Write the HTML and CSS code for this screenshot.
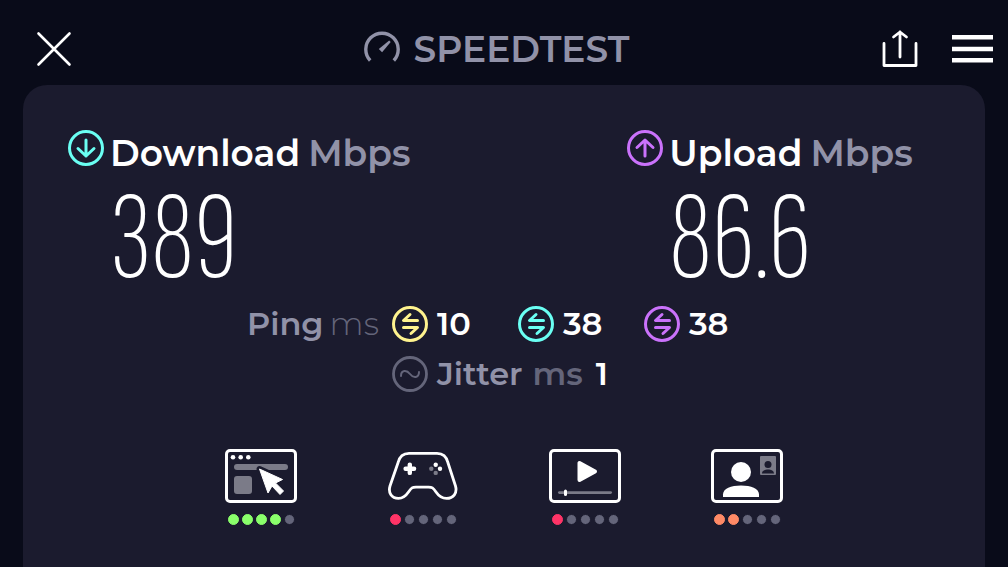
FILE: index.html
```html
<!DOCTYPE html>
<html lang="en">
<head>
    <meta charset="UTF-8">
    <meta name="viewport" content="width=device-width, initial-scale=1.0">
    <title>Speedtest</title>
    <link rel="stylesheet" href="styles.css">
</head>
<body>

<header class="topbar">
    <button type="button" class="icon-button close" aria-label="Close">
        <svg width="36" height="36" viewBox="0 0 36 36" fill="none" stroke="#fff" stroke-width="2.6" stroke-linecap="round"><path d="M2.5 2.5l31 31M33.5 2.5l-31 31"/></svg>
    </button>

    <h1 class="logo">
        <svg width="36" height="36" viewBox="0 0 36 36" fill="none" stroke="#9192a8" stroke-width="3.4"><path d="M6.2 29.500A16.2 16.2 0 1 1 29.8 29.500"/><path fill="#9192a8" stroke="none" d="M25.2 9.500l1.500 1.500-8.600 10.300-3.300-3.300z"/></svg>
        <span>SPEEDTEST</span>
    </h1>

    <div class="actions">
        <button type="button" class="icon-button" aria-label="Share">
            <svg width="36" height="38" viewBox="0 0 36 38" fill="none" stroke="#fff" stroke-width="2.8" stroke-linecap="round" stroke-linejoin="round"><path d="M2 13.500v22h32v-22M18 27V2M11.500 7L18 2l6.500 5"/></svg>
        </button>
        <button type="button" class="icon-button" aria-label="Menu">
            <svg width="41" height="28" viewBox="0 0 41 28" fill="#fff"><path d="M0 0h41v4.600H0zM0 11.700h41v4.600H0zM0 23h41v4.600H0z"/></svg>
        </button>
    </div>
</header>

<main class="card">
    <!-- Download and upload -->
    <section class="results">
        <div class="result">
            <svg width="36" height="36" viewBox="0 0 36 36" fill="none" stroke="#6afff3" stroke-width="3" stroke-linecap="round" stroke-linejoin="round"><circle cx="18" cy="18" r="16.500"/><path d="M18 10v16M10 18.500l8 7.500 8-7.500"/></svg>
            <h2>Download <span>Mbps</span></h2>
            <p>389</p>
        </div>
        <div class="result">
            <svg width="36" height="36" viewBox="0 0 36 36" fill="none" stroke="#ca72fb" stroke-width="3" stroke-linecap="round" stroke-linejoin="round"><circle cx="18" cy="18" r="16.500"/><path d="M18 26V10M10 17.500l8-7.500 8 7.500"/></svg>
            <h2>Upload <span>Mbps</span></h2>
            <p>86.6</p>
        </div>
    </section>

    <!-- Ping and jitter -->
    <section class="latency">
        <div class="label">Ping <span class="unit">ms</span></div>
        <div class="value yellow">
            <svg width="36" height="36" viewBox="0 0 36 36" fill="none" stroke="currentColor" stroke-width="3" stroke-linecap="round" stroke-linejoin="round"><circle cx="18" cy="18" r="16.500"/><path d="M18 8.500L11.500 14.500H25.500M11.500 21.500H25.500L19 27.500"/></svg>
            <span>10</span>
        </div>
        <div class="value cyan">
            <svg width="36" height="36" viewBox="0 0 36 36" fill="none" stroke="currentColor" stroke-width="3" stroke-linecap="round" stroke-linejoin="round"><circle cx="18" cy="18" r="16.500"/><path d="M18 8.500L11.500 14.500H25.500M11.500 21.500H25.500L19 27.500"/></svg>
            <span>38</span>
        </div>
        <div class="value purple">
            <svg width="36" height="36" viewBox="0 0 36 36" fill="none" stroke="currentColor" stroke-width="3" stroke-linecap="round" stroke-linejoin="round"><circle cx="18" cy="18" r="16.500"/><path d="M18 8.500L11.500 14.500H25.500M11.500 21.500H25.500L19 27.500"/></svg>
            <span>38</span>
        </div>
        <div class="jitter">
            <svg width="36" height="36" viewBox="0 0 36 36" fill="none" stroke="#64657a" stroke-width="2.800" stroke-linecap="round"><circle cx="18" cy="18" r="16.500"/><path stroke-width="2" d="M9 20c0-6 5.500-6.500 9-2s9 4 9-2"/></svg>
            <div class="label">Jitter <span class="unit">ms</span></div>
            <strong>1</strong>
        </div>
    </section>

    <!-- Quality scores -->
    <section class="scores">
        <div class="score">
            <svg width="72" height="54" viewBox="0 0 72 54" fill="#fff">
                <rect x="1.500" y="1.500" width="69" height="51" rx="3.500" fill="none" stroke="#fff" stroke-width="3"/>
                <circle cx="8" cy="8.200" r="2.300"/><circle cx="15.700" cy="8.200" r="2.300"/><circle cx="23.300" cy="8.200" r="2.300"/>
                <rect x="9" y="15" width="54" height="6" rx="3" fill="#7b7b88"/>
                <rect x="9" y="27" width="18" height="18" rx="3" fill="#7b7b88"/>
                <path stroke="#1b1b2e" stroke-width="6" stroke-linejoin="round" d="M34.500 20l8.500 24 4-7 8 8.500 3.500-3.500-8-8 7-3.500z"/>
                <path stroke="#fff" stroke-linejoin="round" d="M34.500 20l8.500 24 4-7 8 8.500 3.500-3.500-8-8 7-3.500z"/>
            </svg>
            <div class="dots"><i class="green"></i><i class="green"></i><i class="green"></i><i class="green"></i><i></i></div>
        </div>
        <div class="score">
            <svg width="72" height="54" viewBox="0 0 72 54" fill="#fff">
                <path fill="none" stroke="#fff" stroke-width="2.800" stroke-linejoin="round" d="M22 4.300h28c6 0 9.500 3.500 10.800 9L68.500 37c2 7-2 12.400-9 12.400-4.500 0-7.500-2-10.500-6.400-3-4.500-4-4.800-7.500-4.800H29c-3.500 0-4.500 .3-7.500 4.800C18.500 47.400 15.500 49.400 11.500 49.400c-7 0-10.500-5.400-8.500-12.400l8.200-23.700C12.500 7.800 16 4.300 22 4.300z"/>
                <path fill="none" stroke="#fff" stroke-width="4.400" stroke-linecap="round" d="M18.600 19.700h8.500M22.800 15.600v8.300"/>
                <circle cx="48.700" cy="15.800" r="2.200"/><circle cx="53" cy="19.700" r="2.200"/>
                <circle cx="44.300" cy="19.700" r="2.200" fill="#7b7b88"/><circle cx="48.700" cy="23.900" r="2.200" fill="#7b7b88"/>
            </svg>
            <div class="dots"><i class="red"></i><i></i><i></i><i></i><i></i></div>
        </div>
        <div class="score">
            <svg width="72" height="54" viewBox="0 0 72 54" fill="#fff">
                <rect x="1.500" y="1.500" width="69" height="51" rx="3.500" fill="none" stroke="#fff" stroke-width="3"/>
                <path stroke="#fff" stroke-width="4" stroke-linejoin="round" d="M30.500 14v17l15.500-8.500z"/>
                <rect x="9" y="42.200" width="54" height="2.800" rx="1.400" fill="#7b7b88"/>
                <rect x="15" y="40.500" width="3" height="6.500" rx="1.500"/>
            </svg>
            <div class="dots"><i class="red"></i><i></i><i></i><i></i><i></i></div>
        </div>
        <div class="score">
            <svg width="72" height="54" viewBox="0 0 72 54" fill="#fff">
                <rect x="1.500" y="1.500" width="69" height="51" rx="3.500" fill="none" stroke="#fff" stroke-width="3"/>
                <circle cx="30" cy="23" r="10"/>
                <path d="M12 48v-2.500C12 39.500 20 36.500 30 36.500s18 3 18 9V48z"/>
                <rect x="49" y="7" width="16" height="19" rx="1" fill="#7b7b88"/>
                <circle cx="57" cy="15.500" r="3.500" fill="#1b1b2e"/>
                <path fill="#1b1b2e" d="M51 24.500c0-5.500 12-5.500 12 0z"/>
            </svg>
            <div class="dots"><i class="orange"></i><i class="orange"></i><i></i><i></i><i></i></div>
        </div>
    </section>
</main>

</body>
</html>
```
FILE: styles.css
```css
* {
    box-sizing: border-box;
}
body {
    display: flex;
    flex-direction: column;
    min-height: 100vh;
    margin: 0;
    background-color: #090b19;
    color: #fff;
    font-family: Montserrat, Inter, sans-serif;
    font-weight: 600;
}
svg {
    display: block;
    flex: none;
}
h1, h2, p {
    margin: 0;
}

/* Top bar */
.topbar {
    display: grid;
    grid-template-columns: 1fr auto 1fr;
    align-items: center;
    padding: 13px 15px 0 0;
    height: 85px;
}
.icon-button {
    padding: 0;
    border: none;
    background: none;
    cursor: pointer;
}
.close {
    justify-self: start;
    margin-left: 36px;
}
.logo {
    display: flex;
    align-items: center;
    gap: 14px;
    color: #9192a8;
    font-size: 36px;
    font-weight: 600;
    line-height: 44px;
}
.actions {
    display: flex;
    align-items: center;
    justify-self: end;
    gap: 34px;
}

/* Main card */
.card {
    flex: 1;
    margin: 0 23px;
    padding-top: 45px;
    border-radius: 24px 24px 0 0;
    background-color: #1b1b2e;
}
.results {
    display: grid;
    grid-template-columns: 61% 39%;
    padding-left: 45px;
}
.result {
    display: grid;
    grid-template-columns: 36px auto;
    column-gap: 6px;
}
.result h2 {
    display: flex;
    gap: 8px;
    font-size: 36px;
    font-weight: 600;
    line-height: 46px;
}
.result h2 span {
    color: #9192a8;
}
.result p {
    grid-column: 2;
    font-family: "Sofia Sans Extra Condensed", "Barlow Condensed", "Roboto Condensed", sans-serif;
    font-size: 124px;
    font-weight: 200;
    line-height: 128px;
}

/* Ping and jitter */
.latency {
    display: grid;
    grid-template-columns: 37% repeat(3, 113px);
    gap: 14px 13px;
    margin-top: 2px;
    font-size: 32px;
    line-height: 36px;
}
.label {
    display: flex;
    gap: 10px;
    color: #9192a8;
}
.latency > .label {
    justify-content: flex-end;
    gap: 6px;
}
.unit {
    color: #64657a;
    font-weight: 600;
}
.latency > .label .unit {
    font-weight: 300;
}
.value, .jitter {
    display: flex;
    align-items: center;
    gap: 9px;
}
.value span {
    color: #fff;
}
.jitter {
    grid-column: 2 / 5;
}
.jitter strong {
    margin-left: 4px;
    font-weight: 600;
}
.yellow {
    color: #fff38e;
}
.cyan {
    color: #6afff3;
}
.purple {
    color: #ca72fb;
}

/* Quality scores */
.scores {
    display: flex;
    justify-content: center;
    gap: 90px;
    margin-top: 57px;
}
.dots {
    display: flex;
    align-items: center;
    justify-content: center;
    gap: 3px;
    margin-top: 11px;
}
.dots i {
    width: 11px;
    height: 11px;
    border: 1px solid #1b1b2e;
    border-radius: 50%;
    background-color: #64657a;
}
.dots .green {
    border-color: #8aff6b;
    background-color: #8aff6b;
}
.dots .red {
    border-color: #ff3467;
    background-color: #ff3467;
}
.dots .orange {
    border-color: #ff8a66;
    background-color: #ff8a66;
}
```
